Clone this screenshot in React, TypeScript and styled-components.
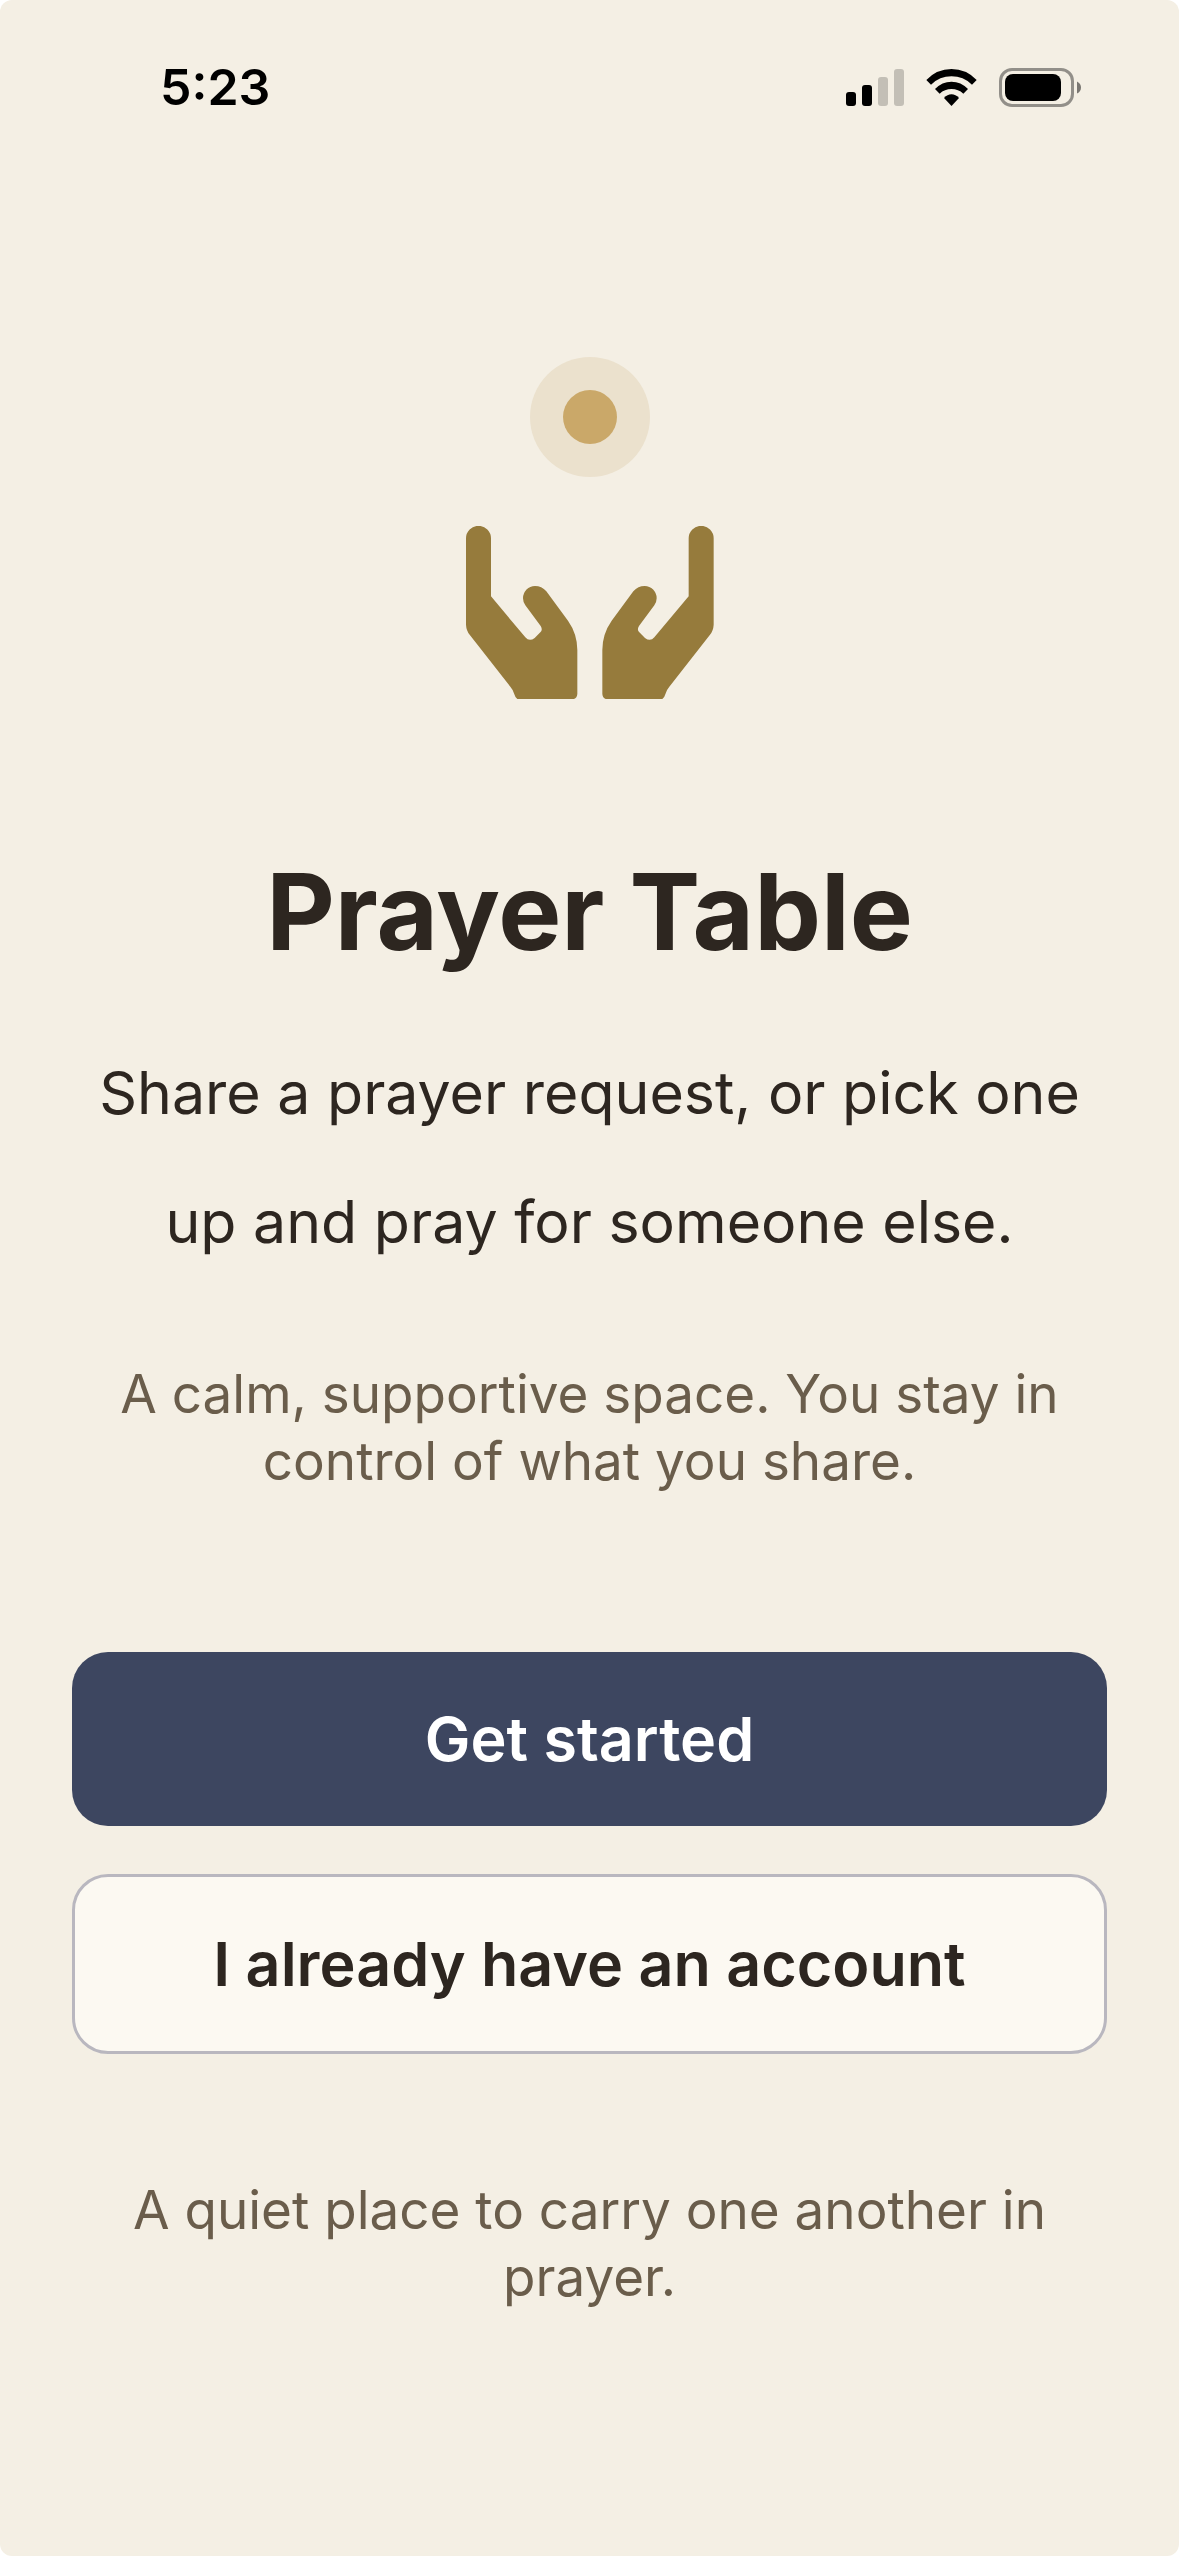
import React from "react";
import styled, { createGlobalStyle } from "styled-components";

const GlobalStyle = createGlobalStyle`
  *, *::before, *::after { box-sizing: border-box; }
  body {
    margin: 0;
    background: #ffffff;
    font-family: Inter, "Liberation Sans", sans-serif;
    color: #2d2620;
  }
`;

const Screen = styled.div`
  min-height: 100vh;
  display: flex;
  flex-direction: column;
  background: #f4efe4;
  border-radius: 12px;
`;

const StatusBar = styled.header`
  display: flex;
  align-items: center;
  justify-content: space-between;
  height: 174px;
  padding: 0 98px 0 160px;
  color: #000000;
`;

const Time = styled.time`
  font-size: 50px;
  line-height: 60px;
  font-weight: 600;
`;

const StatusIcons = styled.div`
  display: flex;
  align-items: center;
  gap: 22px;
`;

const Content = styled.main`
  flex: 1;
  display: flex;
  flex-direction: column;
  align-items: center;
  padding: 183px 72px 72px;
  text-align: center;
`;

const Sun = styled.div`
  display: grid;
  place-items: center;
  width: 120px;
  height: 120px;
  border-radius: 50%;
  background: #ebe1cd;

  &::before {
    content: "";
    width: 54px;
    height: 54px;
    border-radius: 50%;
    background: #caa869;
  }
`;

const Hands = styled.svg`
  display: block;
  width: 248px;
  height: 173px;
  margin-top: 49px;
  fill: #967b3c;
`;

const Title = styled.h1`
  margin: 145px 0 0;
  font-size: 106px;
  line-height: 136px;
  font-weight: 700;
`;

const Lead = styled.p`
  margin: 48px 0 0;
  padding: 0 24px;
  font-size: 59px;
  line-height: 129px;
`;

const Note = styled.p`
  margin: 75px 0 0;
  padding: 0 24px;
  font-size: 53px;
  line-height: 67px;
  color: #6a5d4b;
`;

const Actions = styled.div`
  display: flex;
  flex-direction: column;
  gap: 48px;
  width: 100%;
  margin: 157px 0 48px;
`;

const Button = styled.button<{ $outlined?: boolean }>`
  width: 100%;
  padding: 48px;
  border: ${(p) => (p.$outlined ? "3px solid #b9b7bf" : "0")};
  border-radius: 36px;
  background: ${(p) => (p.$outlined ? "#fcf9f2" : "#3d4660")};
  color: ${(p) => (p.$outlined ? "#2d2620" : "#ffffff")};
  font-family: inherit;
  font-size: 61px;
  line-height: 78px;
  font-weight: 600;
  cursor: pointer;
`;

const HAND =
  "M78 115A37.5 37.5 0 0 1 153 115V289L256 412Q268 426 284 414L301 397Q309 389 302 378L256 316Q249 306 249 295A36 37 0 0 1 285 258Q305 258 319 274L384 362Q412 402 412 450V582Q411 594 402 597H232Q226 594 223 583Q220 570 211 560L89 404Q79 392 78 374Z";

function SignalIcon() {
  return (
    <svg width="58" height="37" viewBox="0 0 58 37" aria-label="Signal strength">
      <rect x="0" y="23" width="10" height="14" rx="3" />
      <rect x="16" y="16" width="10" height="21" rx="3" />
      <rect x="32" y="8" width="10" height="29" rx="3" opacity="0.2" />
      <rect x="48" y="0" width="10" height="37" rx="3" opacity="0.2" />
    </svg>
  );
}

function WifiIcon() {
  return (
    <svg width="51" height="37" viewBox="319 57 151 111" aria-label="Wi-Fi">
      <path d="M319 90Q350 57 394.500 57Q439 57 470 90L456 104Q430 79 394.500 79Q359 79 333 104Z" />
      <path d="M345 117Q366 95 394.500 95Q423 95 444 117L430 131Q415 117 394.500 117Q374 117 359 131Z" />
      <path d="M372 144Q382 133 394.500 133Q407 133 417 144L394.500 168Z" />
    </svg>
  );
}

function BatteryIcon() {
  return (
    <svg width="82" height="39" viewBox="0 0 82 39" aria-label="Battery">
      <rect x="1.500" y="1.500" width="72" height="36" rx="11.500" fill="none" stroke="#000" strokeWidth="3" opacity="0.4" />
      <rect x="6" y="6" width="56" height="27" rx="8" />
      <path d="M78 13.500Q82 15.500 82 19.500Q82 23.500 78 25.500Z" opacity="0.5" />
    </svg>
  );
}

export default function App() {
  return (
    <>
      <GlobalStyle />
      <Screen>
        <StatusBar>
          <Time>5:23</Time>
          <StatusIcons>
            <SignalIcon />
            <WifiIcon />
            <BatteryIcon />
          </StatusIcons>
        </StatusBar>
        <Content>
          <Sun />
          <Hands viewBox="78 78 744 519" aria-hidden="true">
            <path d={HAND} />
            <path d={HAND} transform="translate(899 0) scale(-1 1)" />
          </Hands>
          <Title>Prayer Table</Title>
          <Lead>
            Share a prayer request, or pick one up and pray for someone else.
          </Lead>
          <Note>
            A calm, supportive space. You stay in control of what you share.
          </Note>
          <Actions>
            <Button type="button">Get started</Button>
            <Button type="button" $outlined>
              I already have an account
            </Button>
          </Actions>
          <Note>A quiet place to carry one another in prayer.</Note>
        </Content>
      </Screen>
    </>
  );
}
